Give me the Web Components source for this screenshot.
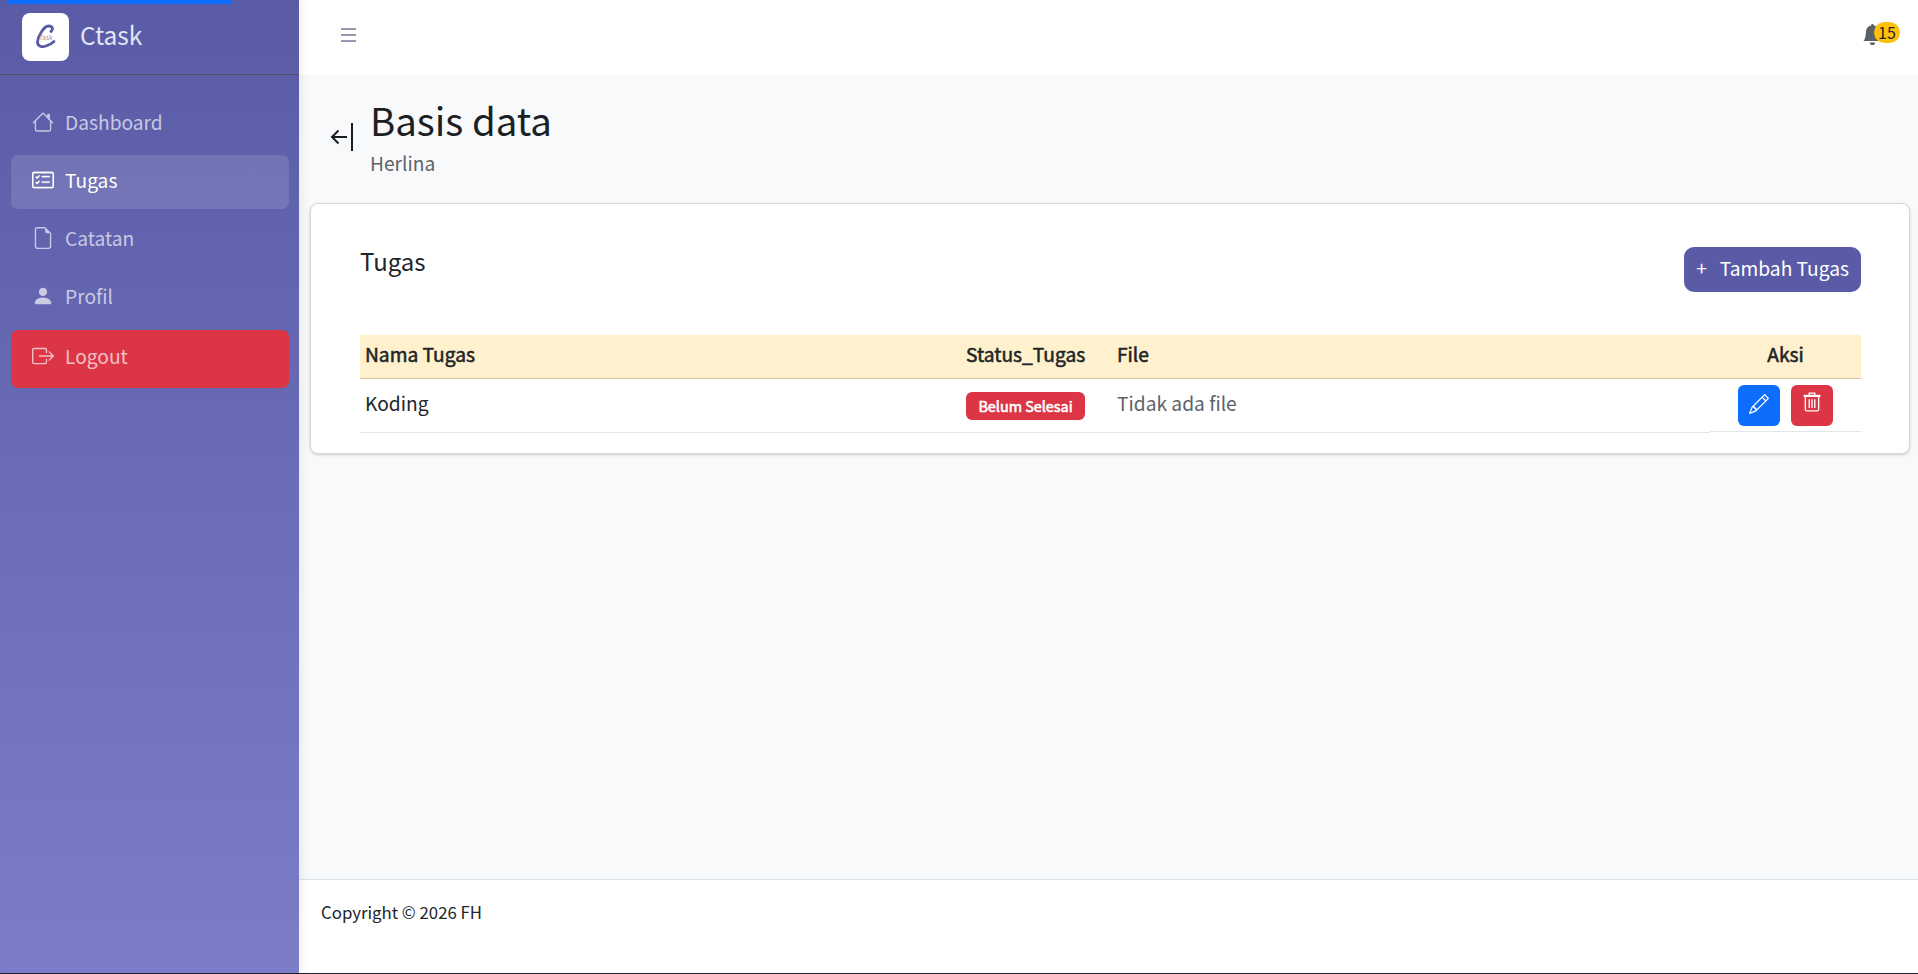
<!DOCTYPE html>
<html lang="id">
<head>
<meta charset="utf-8">
<title>Ctask</title>
<style>
  html, body { margin: 0; height: 100%; }
  body {
    font-family: "Noto Sans CJK SC", "Noto Sans", sans-serif;
    color: #212529;
    background: #f8f9fa;
    overflow: hidden;
  }
  app-shell { height: 974px; }
</style>
</head>
<body>
<app-shell>
  <side-bar slot="side">
    <nav-item icon="home" label="Dashboard"></nav-item>
    <nav-item icon="tasks" label="Tugas" active></nav-item>
    <nav-item icon="file" label="Catatan"></nav-item>
    <nav-item icon="person" label="Profil"></nav-item>
    <nav-item icon="logout" label="Logout" danger></nav-item>
  </side-bar>
  <top-bar slot="top"></top-bar>
  <page-heading slot="main" title="Basis data" sub="Herlina"></page-heading>
  <task-card slot="main"></task-card>
  <page-footer slot="foot"></page-footer>
</app-shell>

<script>
const ICONS = {
  home: `<svg width="22" height="22" viewBox="0 0 16 16" fill="currentColor"><path d="M8.707 1.500a1 1 0 0 0-1.414 0L.646 8.146a.5.5 0 0 0 .708.708L2 8.207V13.500A1.500 1.500 0 0 0 3.500 15h9a1.500 1.500 0 0 0 1.500-1.500V8.207l.646.647a.5.5 0 0 0 .708-.708L13 5.793V2.500a.5.5 0 0 0-.5-.5h-1a.5.5 0 0 0-.5.500v1.293zM13 7.207V13.500a.5.5 0 0 1-.5.5h-9a.5.5 0 0 1-.5-.5V7.207l5-5z"/></svg>`,
  tasks: `<svg width="22" height="22" viewBox="0 0 16 16" fill="currentColor" stroke="currentColor" stroke-width=".25"><path d="M14.500 3a.5.5 0 0 1 .5.500v9a.5.5 0 0 1-.5.5h-13a.5.5 0 0 1-.5-.5v-9a.5.5 0 0 1 .5-.5zm-13-1A1.500 1.500 0 0 0 0 3.500v9A1.500 1.500 0 0 0 1.500 14h13a1.500 1.500 0 0 0 1.500-1.500v-9A1.500 1.500 0 0 0 14.500 2z"/><path d="M7 5.500a.5.5 0 0 1 .5-.5h5a.5.5 0 0 1 0 1h-5a.5.5 0 0 1-.5-.5m-1.496-.854a.5.5 0 0 1 0 .708l-1.500 1.500a.5.5 0 0 1-.708 0l-.5-.5a.5.5 0 1 1 .708-.708l.146.147 1.146-1.147a.5.5 0 0 1 .708 0M7 9.500a.5.5 0 0 1 .5-.5h5a.5.5 0 0 1 0 1h-5a.5.5 0 0 1-.5-.5m-1.496-.854a.5.5 0 0 1 0 .708l-1.500 1.500a.5.5 0 0 1-.708 0l-.5-.5a.5.5 0 0 1 .708-.708l.146.147 1.146-1.147a.5.5 0 0 1 .708 0"/></svg>`,
  file: `<svg width="22" height="22" viewBox="0 0 16 16" fill="currentColor"><path d="M14 4.500V14a2 2 0 0 1-2 2H4a2 2 0 0 1-2-2V2a2 2 0 0 1 2-2h5.500zm-3 0A1.500 1.500 0 0 1 9.500 3V1H4a1 1 0 0 0-1 1v12a1 1 0 0 0 1 1h8a1 1 0 0 0 1-1V4.500z"/></svg>`,
  person: `<svg width="22" height="22" viewBox="0 0 16 16" fill="currentColor"><path d="M3 14s-1 0-1-1 1-4 6-4 6 3 6 4-1 1-1 1zm5-6a3 3 0 1 0 0-6 3 3 0 0 0 0 6"/></svg>`,
  logout: `<svg width="22" height="22" viewBox="0 0 16 16" fill="currentColor"><path d="M10 12.500a.5.5 0 0 1-.5.5h-8a.5.5 0 0 1-.5-.5v-9a.5.5 0 0 1 .5-.5h8a.5.5 0 0 1 .5.500v2a.5.5 0 0 0 1 0v-2A1.500 1.500 0 0 0 9.500 2h-8A1.500 1.500 0 0 0 0 3.500v9A1.500 1.500 0 0 0 1.500 14h8a1.500 1.500 0 0 0 1.500-1.500v-2a.5.5 0 0 0-1 0z"/><path d="M15.854 8.354a.5.5 0 0 0 0-.708l-3-3a.5.5 0 0 0-.708.708L14.293 7.500H5.500a.5.5 0 0 0 0 1h8.793l-2.147 2.146a.5.5 0 0 0 .708.708z"/></svg>`
};

class AppShell extends HTMLElement {
  constructor() {
    super();
    this.attachShadow({ mode: "open" });
  }
  connectedCallback() {
    this.shadowRoot.innerHTML = `
      <style>
        :host { display: grid; grid-template-columns: 299px 1fr; border-bottom: 1px solid #212529; box-sizing: border-box; }
        .right { display: flex; flex-direction: column; min-width: 0; }
        main { flex: 1; padding: 0 8px 0 11px; }
      </style>
      <slot name="side"></slot>
      <div class="right">
        <slot name="top"></slot>
        <main><slot name="main"></slot></main>
        <slot name="foot"></slot>
      </div>`;
  }
}

class SideBar extends HTMLElement {
  constructor() {
    super();
    this.attachShadow({ mode: "open" });
  }
  connectedCallback() {
    this.shadowRoot.innerHTML = `
      <style>
        :host { display: block; position: relative; z-index: 1; background: linear-gradient(180deg, #5a5ba6 0%, #7b7dc9 100%); box-shadow: 0 0 12px rgba(0,0,0,.1); }
        .progress { position: absolute; left: 7px; top: 0; width: 225px; height: 4px; background: #0d6efd; }
        .brand { display: flex; align-items: center; gap: 11px; height: 74px; padding-left: 22px; border-bottom: 1px solid #4f4f63; }
        .logo { width: 47px; height: 48px; background: #fff; border-radius: 8px; display: flex; align-items: center; justify-content: center; }
        .name { font-size: 24.500px; line-height: 30px; padding-bottom: 4px; color: #e3e5f3; }
        nav { display: flex; flex-direction: column; gap: 4px; padding: 22px 10px 0 11px; }
      </style>
      <div class="progress"></div>
      <div class="brand">
        <div class="logo">
          <svg width="24" height="28" viewBox="0 0 24 28" fill="none">
            <path d="M17 8.500C20 5 18 3 14.500 3C10 3 4 13 3.500 19C3.500 23.500 8 24.500 12 23C15 22 18 20.500 20 18.500" stroke="#5a5ba6" stroke-width="2.800" stroke-linecap="round"/>
            <text x="5" y="16.500" font-size="6.500" fill="#b58a94">Task</text>
          </svg>
        </div>
        <div class="name">Ctask</div>
      </div>
      <nav><slot></slot></nav>`;
  }
}

class NavItem extends HTMLElement {
  constructor() {
    super();
    this.attachShadow({ mode: "open" });
  }
  connectedCallback() {
    const active = this.hasAttribute("active");
    const danger = this.hasAttribute("danger");
    this.shadowRoot.innerHTML = `
      <style>
        :host { display: block; ${danger ? "margin-top: 1px;" : ""} }
        a { display: flex; align-items: center; height: ${danger ? 58 : 54}px; box-sizing: border-box; padding: 0 0 ${danger ? 6 : 4}px 21px; border-radius: 7px; font-size: 19.200px; text-decoration: none;
            color: ${active ? "#fff" : danger ? "rgba(255,255,255,.7)" : "rgba(255,255,255,.66)"};
            background: ${active ? "rgba(255,255,255,.12)" : danger ? "#dc3545" : "transparent"}; }
        .ic { width: 22px; height: 22px; margin-right: 11px; display: flex; flex: none; }
      </style>
      <a href="#"><span class="ic">${ICONS[this.getAttribute("icon")]}</span><span>${this.getAttribute("label")}</span></a>`;
  }
}

class TopBar extends HTMLElement {
  constructor() {
    super();
    this.attachShadow({ mode: "open" });
  }
  connectedCallback() {
    this.shadowRoot.innerHTML = `
      <style>
        :host { display: flex; align-items: flex-start; justify-content: space-between; height: 75px; background: #fff; padding: 0 35px 0 42px; box-sizing: border-box; }
        .burger { display: block; color: #77779a; margin-top: 27px; }
        .bell { position: relative; width: 21px; height: 21px; margin-top: 24px; color: #5b5f66; }
        .bell svg { display: block; }
        .badge { position: absolute; left: 12px; top: -2px; width: 26px; height: 21px; border-radius: 11px; background: #ffc107; color: #212529; font-size: 16px; line-height: 20px; text-align: center; }
      </style>
      <svg class="burger" width="15" height="16" viewBox="0 0 15 16" fill="none" stroke="currentColor" stroke-width="1.300"><path d="M0 2H15M0 8H15M0 14H15"/></svg>
      <div class="bell">
        <svg width="21" height="21" viewBox="0 0 16 16" fill="currentColor"><path d="M8 16a2 2 0 0 0 2-2H6a2 2 0 0 0 2 2m.995-14.901a1 1 0 1 0-1.990 0A5 5 0 0 0 3 6c0 1.098-.5 6-2 7h14c-1.500-1-2-5.902-2-7 0-2.420-1.720-4.440-4.005-4.901"/></svg>
        <span class="badge">15</span>
      </div>`;
  }
}

class PageHeading extends HTMLElement {
  constructor() {
    super();
    this.attachShadow({ mode: "open" });
  }
  connectedCallback() {
    this.shadowRoot.innerHTML = `
      <style>
        :host { display: flex; align-items: flex-start; height: 128px; padding: 20px 0 0 20px; box-sizing: border-box; }
        a { display: block; color: #1a1d20; margin: 28px 17px 0 0; height: 28px; }
        a svg { display: block; }
        h1 { margin: 0 0 7px; font-size: 38.400px; font-weight: 400; line-height: 48px; color: #1c1f23; }
        p { margin: 0; font-size: 19.200px; line-height: 26px; color: #5c636a; }
      </style>
      <a href="#"><svg width="23" height="28" viewBox="0 0 23 28" fill="none" stroke="currentColor"><path d="M17 14H2M8.500 7.500L2 14L8.500 20.500" stroke-width="2"/><path d="M22 0V28" stroke-width="2"/></svg></a>
      <div><h1>${this.getAttribute("title")}</h1><p>${this.getAttribute("sub")}</p></div>`;
  }
}

class TaskCard extends HTMLElement {
  constructor() {
    super();
    this.attachShadow({ mode: "open" });
  }
  connectedCallback() {
    this.shadowRoot.innerHTML = `
      <style>
        :host { display: block; height: 251px; box-sizing: border-box; background: #fff; border: 1px solid #d5d8dc; border-radius: 8px; box-shadow: 0 1px 3px rgba(0,0,0,.18); padding: 43px 48px 0 49px; }
        .head { display: flex; justify-content: space-between; align-items: flex-start; height: 88px; }
        h2 { margin: -1px 0 0; font-size: 24px; font-weight: 400; line-height: 30px; color: #212529; }
        .add { display: flex; align-items: center; height: 45px; padding: 0 12px 3px; border: 0; border-radius: 10px; background: #5a5ba6; color: #fff; font: inherit; font-size: 19.200px; box-sizing: border-box; }
        .add span { margin-right: 13px; }
        table { width: 100%; border-collapse: collapse; table-layout: fixed; }
        th { box-sizing: border-box; background: #fff1cd; font-weight: 400; -webkit-text-stroke: .55px currentColor; font-size: 19.200px; text-align: left; height: 43px; padding: 0 5px 4px; border-bottom: 1px solid #d3c7a4; color: #212529; }
        td { box-sizing: border-box; height: 54px; padding: 0 5px 5px; border-bottom: 1px solid #e3e5e8; font-size: 19.200px; color: #212529; }
        td.status { padding: 2px 5px 0; }
        .muted { color: #5c636a; }
        td.aksi { padding: 0; border-bottom-color: #fff; box-shadow: inset 0 -1px 0 #e3e5e8; }
        .pill { display: block; width: 119px; box-sizing: border-box; background: #dc3545; color: #fff; font-size: 14.400px; -webkit-text-stroke: .6px currentColor; line-height: 27px; height: 28px; text-align: center; border-radius: 6px; }
        .btns { display: flex; justify-content: center; gap: 11px; }
        .btn { width: 42px; height: 41px; border-radius: 6px; display: flex; align-items: center; justify-content: center; color: #fff; box-sizing: border-box; }
        .blue { background: #0d6efd; padding-bottom: 2px; }
        .red { background: #dc3545; padding-bottom: 6px; }
      </style>
      <div class="head">
        <h2>Tugas</h2>
        <button class="add"><span>+</span>Tambah Tugas</button>
      </div>
      <table>
        <colgroup><col style="width:601px"><col style="width:151px"><col><col style="width:151px"></colgroup>
        <thead><tr><th>Nama Tugas</th><th>Status_Tugas</th><th>File</th><th style="text-align:center">Aksi</th></tr></thead>
        <tbody><tr>
          <td>Koding</td>
          <td class="status"><span class="pill">Belum Selesai</span></td>
          <td class="muted">Tidak ada file</td>
          <td class="aksi"><div class="btns">
            <div class="btn blue"><svg width="20" height="20" viewBox="0 0 16 16" fill="currentColor"><path d="M12.146.146a.5.5 0 0 1 .708 0l3 3a.5.5 0 0 1 0 .708l-10 10a.5.5 0 0 1-.168.110l-5 2a.5.5 0 0 1-.650-.650l2-5a.5.5 0 0 1 .110-.168zM11.207 2.500 13.500 4.793 14.793 3.500 12.500 1.207zm1.586 3L10.500 3.207 4 9.707V10h.5a.5.5 0 0 1 .5.500v.5h.5a.5.5 0 0 1 .5.500v.5h.293zm-9.761 5.175-.106.106-1.528 3.821 3.821-1.528.106-.106A.5.5 0 0 1 5 12.500V12h-.5a.5.5 0 0 1-.5-.500V11h-.5a.5.5 0 0 1-.468-.325"/></svg></div>
            <div class="btn red"><svg width="18" height="20" viewBox="0 0 16 18" fill="none" stroke="currentColor" stroke-width="1.200"><path d="M.5 3.500H15.500" stroke-width="2"/><path d="M5.500 3V1H10.500V3"/><path d="M2 4.500V15.500A1.500 1.500 0 0 0 3.500 17H12.500A1.500 1.500 0 0 0 14 15.500V4.500"/><path d="M5.500 6.500V14.500M8 6.500V14.500M10.500 6.500V14.500"/></svg></div>
          </div></td>
        </tr></tbody>
      </table>`;
  }
}

class PageFooter extends HTMLElement {
  constructor() {
    super();
    this.attachShadow({ mode: "open" });
  }
  connectedCallback() {
    this.shadowRoot.innerHTML = `
      <style>
        :host { display: flex; align-items: center; height: 94px; box-sizing: border-box; padding: 0 0 29px 22px; background: #fff; border-top: 1px solid #dee2e6; font-size: 16.800px; color: #212529; }
      </style>
      Copyright © 2026 FH`;
  }
}

customElements.define("app-shell", AppShell);
customElements.define("side-bar", SideBar);
customElements.define("nav-item", NavItem);
customElements.define("top-bar", TopBar);
customElements.define("page-heading", PageHeading);
customElements.define("task-card", TaskCard);
customElements.define("page-footer", PageFooter);
</script>
</body>
</html>
